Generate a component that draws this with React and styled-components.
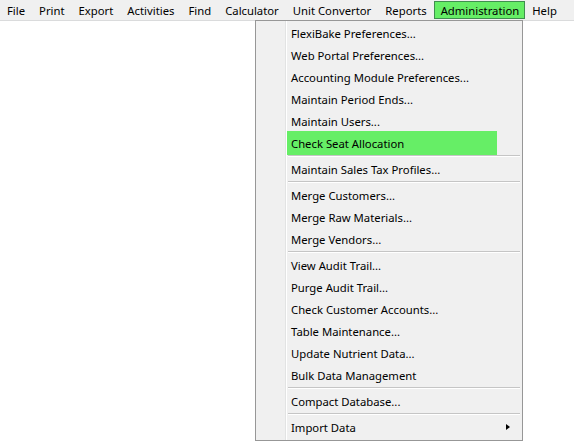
import React from "react"
import styled, { createGlobalStyle } from "styled-components"

const GlobalStyle = createGlobalStyle`
    html, body {
        margin: 0;
        padding: 0;
        background: #fff;
    }
    body {
        font-family: "Noto Sans", "Liberation Sans", sans-serif;
        font-size: 11.3px;
        color: #000;
    }
`

const Screen = styled.div`
    position: relative;
    width: 574px;
    height: 442px;
    overflow: hidden;
    background: #fff;
`

const MenuBar = styled.div`
    display: flex;
    align-items: stretch;
    height: 20px;
    background: #f0f0f0;
    border-bottom: 1px solid #dadbdc;
`

const BarItem = styled.div`
    display: flex;
    align-items: center;
    padding: 0 ${p => (p.$active ? "5px" : "6px")} 0 ${p => (p.$active ? "6px" : "6px")};
    margin-top: 1px;
    height: 18px;
    box-sizing: border-box;
    border: 1px solid ${p => (p.$active ? "#3f8f4f" : "transparent")};
    background: ${p => (p.$active ? "#66ee66" : "transparent")};
    white-space: nowrap;
`

const Dropdown = styled.div`
    position: absolute;
    top: 20px;
    left: 255px;
    width: 268px;
    box-sizing: border-box;
    border: 1px solid #979797;
    background: #f0f0f0;
    padding: 1px 1px 2px 1px;
    display: flex;
    flex-direction: column;
`

const Gutter = styled.div`
    position: absolute;
    top: 0;
    bottom: 0;
    left: 29px;
    width: 1px;
    background: #e2e3e3;
    border-right: 1px solid #fff;
`

const Item = styled.div`
    position: relative;
    display: flex;
    align-items: center;
    height: ${p => (p.$hot ? "24px" : "22px")};
    margin: ${p => (p.$hot ? "-1px 24px -1px 30px" : "0 0 0 30px")};
    padding-left: 4px;
    background: ${p => (p.$hot ? "#66ee66" : "transparent")};
    white-space: nowrap;
`

const Arrow = styled.span`
    position: absolute;
    right: 11px;
    top: 8px;
    width: 0;
    height: 0;
    border-top: 3.5px solid transparent;
    border-bottom: 3.5px solid transparent;
    border-left: 4px solid #000;
`

const Separator = styled.div`
    height: 1px;
    margin: 1px 1px 1px 31px;
    background: #c5c5c5;
    border-bottom: 1px solid #fff;
`

const barItems = [
    "File", "Print", "Export", "Activities", "Find", "Calculator",
    "Unit Convertor", "Reports", "Administration", "Help",
]

const menu = [
    "FlexiBake Preferences...",
    "Web Portal Preferences...",
    "Accounting Module Preferences...",
    "Maintain Period Ends...",
    "Maintain Users...",
    { label: "Check Seat Allocation", hot: true },
    "-",
    "Maintain Sales Tax Profiles...",
    "-",
    "Merge Customers...",
    "Merge Raw Materials...",
    "Merge Vendors...",
    "-",
    "View Audit Trail...",
    "Purge Audit Trail...",
    "Check Customer Accounts...",
    "Table Maintenance...",
    "Update Nutrient Data...",
    "Bulk Data Management",
    "-",
    "Compact Database...",
    "-",
    { label: "Import Data", sub: true },
]

const App = () => {
    return <>
        <GlobalStyle />
        <Screen>
            <MenuBar>
                {barItems.map(name => (
                    <BarItem key={name} $active={name === "Administration"}>{name}</BarItem>
                ))}
            </MenuBar>
            <Dropdown>
                <Gutter />
                {menu.map((entry, i) => {
                    if (entry === "-") return <Separator key={i} />
                    const e = typeof entry === "string" ? { label: entry } : entry
                    return (
                        <Item key={i} $hot={e.hot}>
                            {e.label}
                            {e.sub && <Arrow />}
                        </Item>
                    )
                })}
            </Dropdown>
        </Screen>
    </>
}

export default App
